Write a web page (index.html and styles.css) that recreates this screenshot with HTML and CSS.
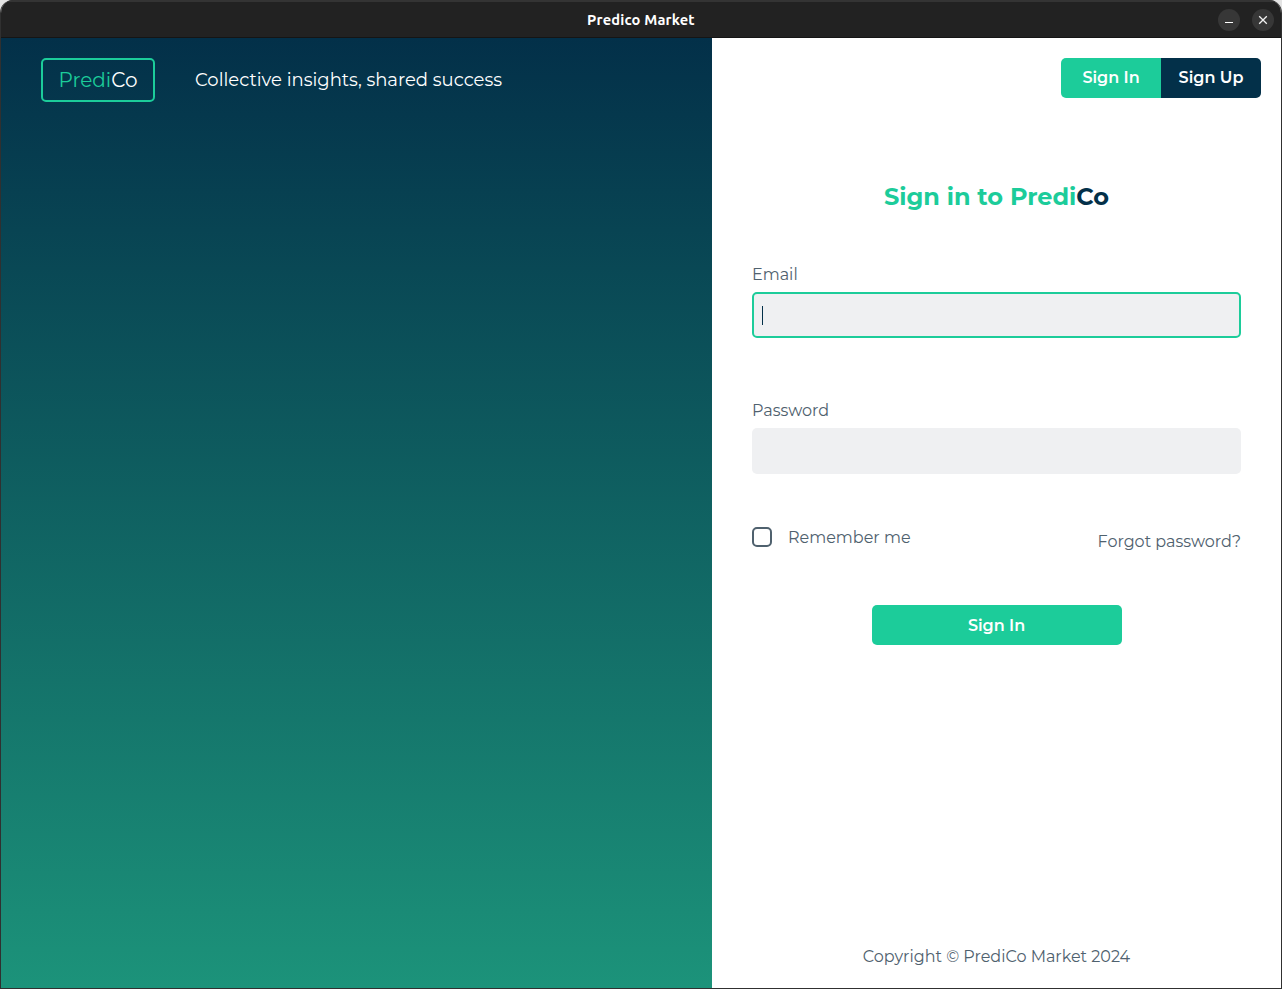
FILE: index.html
```html
<!DOCTYPE html>
<html lang="en">
<head>
<meta charset="utf-8">
<title>Predico Market</title>
<link rel="stylesheet" href="styles.css">
</head>
<body>
<div class="window">
  <header class="titlebar">
    <span class="window-title">Predico Market</span>
    <div class="window-controls">
      <span class="control"><svg width="22" height="22" viewBox="0 0 22 22"><path d="M7 13.5h8" stroke="#fff" stroke-width="1"/></svg></span>
      <span class="control"><svg width="22" height="22" viewBox="0 0 22 22"><path d="M7.2 7.2l7.6 7.6M14.8 7.2l-7.6 7.6" stroke="#f2f2f2" stroke-width="1.3"/></svg></span>
    </div>
  </header>
  <main class="content">
    <section class="hero">
      <div class="logo"><span class="logo-text"><span class="green">Predi</span>Co</span></div>
      <p class="tagline">Collective insights, shared success</p>
    </section>
    <section class="panel">
      <nav class="tabs">
        <button class="tab tab-in"><span>Sign In</span></button>
        <button class="tab tab-up"><span>Sign Up</span></button>
      </nav>
      <h1 class="heading"><span>Sign in to Predi<span class="navy">Co</span></span></h1>
      <form class="form">
        <label class="label label-email"><span>Email</span></label>
        <div class="field focused"><span class="caret"></span></div>
        <label class="label label-password"><span>Password</span></label>
        <div class="field"></div>
        <div class="options">
          <label class="remember"><span class="checkbox"></span><span class="remember-text">Remember me</span></label>
          <a class="forgot">Forgot password?</a>
        </div>
        <button class="submit" type="button"><span>Sign In</span></button>
      </form>
      <footer class="footer"><span>Copyright © PrediCo Market 2024</span></footer>
    </section>
  </main>
</div>
</body>
</html>
```
FILE: styles.css
```css
* { box-sizing: border-box; }
html, body { margin: 0; height: 100%; overflow: hidden; background: #e4e4e4; }
body { font-family: Montserrat, Inter, sans-serif; font-size: 16px; color: #4f616e; }
button { border: 0; padding: 0; font: inherit; color: #fff; }
.window { width: 1282px; height: 989px; border: 1px solid #303030; border-top: 0; border-radius: 13px 13px 0 0; overflow: hidden; display: flex; flex-direction: column; background: #fff; }
.titlebar { flex: none; height: 38px; background: #222; border-top: 2px solid #343434; border-bottom: 1px solid #151515; display: grid; grid-template-columns: 1fr auto 1fr; align-items: center; }
.window-title { grid-column: 2; font: 700 14.667px/20px Ubuntu, "Noto Sans", sans-serif; letter-spacing: .18px; color: #fff; }
.window-controls { display: flex; justify-content: flex-end; gap: 12px; padding-right: 7px; }
.control { width: 22px; height: 22px; border-radius: 50%; background: #373737; }
.control svg { display: block; }
.content { flex: 1; display: flex; }
.hero { width: 711px; padding: 20px 40px; display: flex; gap: 40px; align-items: flex-start; background: linear-gradient(#033049, #1c937a); color: #fff; }
.logo { width: 114px; height: 44px; border: 2px solid #1ccc9a; border-radius: 5px; display: flex; justify-content: center; align-items: center; font-size: 20px; }
.green { color: #1ccc9a; }
.tagline { margin: 0; font-size: 18px; line-height: 44px; white-space: nowrap; }
.panel { flex: 1; padding: 20px 40px 19px; display: flex; flex-direction: column; }
.tabs { display: flex; align-self: flex-end; margin-right: -20px; }
.tab { width: 100px; height: 40px; font-weight: 600; padding-bottom: 2px; }
.tab-in { background: #1ccc9a; border-radius: 5px 0 0 5px; }
.tab-up { background: #033049; border-radius: 0 5px 5px 0; }
.heading { margin: 83px 0 0; font-size: 24px; line-height: 32px; font-weight: 700; text-align: center; color: #1ccc9a; }
.navy { color: #033049; }
.form { display: flex; flex-direction: column; }
.label { line-height: 20px; margin-bottom: 7px; }
.label-email { margin-top: 52px; }
.label-password { margin-top: 63px; }
.field { height: 46px; border-radius: 5px; background: #eff0f2; }
.focused { border: 2px solid #1ccc9a; padding: 12px 8px; }
.caret { display: block; width: 1px; height: 19px; background: #033049; }
.options { display: flex; justify-content: space-between; height: 24px; margin-top: 53px; line-height: 20px; }
.remember { display: flex; gap: 16px; }
.remember-text { padding-top: 1px; }
.checkbox { width: 20px; height: 20px; border: 2px solid #4f616e; border-radius: 5px; }
.forgot { padding-top: 5px; }
.submit { width: 250px; height: 40px; margin-top: 54px; align-self: center; background: #1ccc9a; border-radius: 5px; font-weight: 600; }
.footer { margin-top: auto; line-height: 24px; text-align: center; }
```
